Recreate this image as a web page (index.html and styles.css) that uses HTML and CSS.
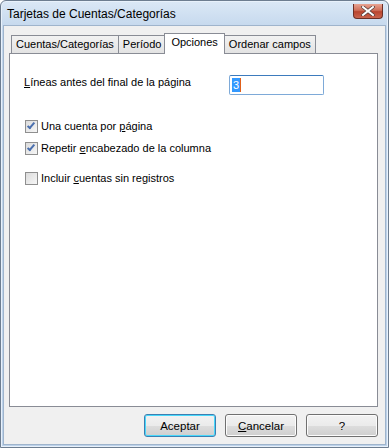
FILE: index.html
```html
<!DOCTYPE html>
<html lang="es">
<head>
    <meta charset="UTF-8">
    <title>Tarjetas de Cuentas/Categorías</title>
    <link rel="stylesheet" href="styles.css">
</head>
<body>
    <div class="window">
        <div class="titlebar">
            <span class="title">Tarjetas de Cuentas/Categorías</span>
            <span class="close">
                <svg width="14" height="10" viewBox="0 0 14 10">
                    <path d="M2 1 L12 9 M12 1 L2 9" stroke="#4a3a3a" stroke-width="3.4" stroke-linecap="square"/>
                    <path d="M2 1 L12 9 M12 1 L2 9" stroke="#fff" stroke-width="2" stroke-linecap="square"/>
                </svg>
            </span>
        </div>
        <div class="client">
            <ul class="tabs">
                <li class="tab">Cuentas/Categorías</li>
                <li class="tab">Período</li>
                <li class="tab active">Opciones</li>
                <li class="tab">Ordenar campos</li>
            </ul>
            <section class="panel">
                <div class="field">
                    <label class="field-label"><u>L</u>íneas antes del final de la página</label>
                    <span class="input"><span class="sel">3</span><span class="caret"></span></span>
                </div>
                <div class="checks">
                    <label class="check"><span class="box on"></span><span>Una cuenta por <u>p</u>ágina</span></label>
                    <label class="check"><span class="box on"></span><span>Repetir <u>e</u>ncabezado de la columna</span></label>
                    <label class="check spaced"><span class="box"></span><span>Incluir <u>c</u>uentas sin registros</span></label>
                </div>
            </section>
            <div class="buttons">
                <button class="btn default">Aceptar</button>
                <button class="btn"><u>C</u>ancelar</button>
                <button class="btn">?</button>
            </div>
        </div>
    </div>
</body>
</html>
```

FILE: styles.css
```css
html {
    box-sizing: border-box;
}

*, *::after, *::before {
    box-sizing: inherit;
}

body {
    margin: 0;
    font-family: 'Liberation Sans', Arial, sans-serif;
    font-size: 11px;
    color: #000;
}

u {
    text-decoration: underline;
    text-underline-offset: 1px;
}

.window {
    width: 389px;
    height: 448px;
    display: flex;
    flex-direction: column;
    border: 1px solid #6d7d90;
    border-radius: 6px 6px 0 0;
    background: linear-gradient(#dbe8f6, #c2d6ec 30px, #bcd2ea);
    box-shadow: inset 0 0 0 1px #e8f1fb;
}

.titlebar {
    height: 24px;
    display: flex;
    align-items: center;
    padding: 0 5px 0 6px;
}

.title {
    font-size: 12px;
    margin-top: 1px;
}

.close {
    margin-left: auto;
    width: 30px;
    height: 15px;
    margin-top: -4px;
    display: flex;
    align-items: center;
    justify-content: center;
    border: 1px solid #6b2f26;
    border-top: none;
    border-radius: 0 0 4px 4px;
    background: linear-gradient(#e8a493, #cf6f5a 45%, #b9452f 55%, #c9644e);
}

.client {
    flex: 1;
    margin: 0 2px 2px 2px;
    border: 1px solid #9fb4cc;
    background: #f0f0f0;
    display: flex;
    flex-direction: column;
    padding: 6px 7px 7px 5px;
}

.tabs {
    list-style: none;
    margin: 0;
    padding: 0 0 0 2px;
    display: flex;
    align-items: flex-end;
    height: 21px;
    position: relative;
    z-index: 1;
}

.tab {
    height: 18px;
    padding: 2px 4px 0 4px;
    border: 1px solid #898c95;
    border-bottom: none;
    margin-right: -1px;
    background: linear-gradient(#f2f2f2, #e3e3e3);
    white-space: nowrap;
}

.tab.active {
    height: 21px;
    margin: 0 -1px -1px -1px;
    padding: 2px 6px 0 6px;
    background: #fff;
    position: relative;
    z-index: 2;
}

.panel {
    flex: 1;
    background: #fff;
    border: 1px solid #898c95;
    padding: 21px 14px 0 14px;
}

.field {
    display: flex;
    align-items: flex-start;
}

.field-label {
    width: 205px;
    padding-top: 1px;
}

.input {
    width: 95px;
    height: 20px;
    border: 1px solid #7eaad8;
    border-top-color: #3d7bbd;
    border-radius: 2px;
    background: #fff;
    display: flex;
    align-items: center;
    padding-left: 2px;
}

.sel {
    background: #3399ff;
    color: #fff;
    line-height: 14px;
    padding: 0 1px;
}

.caret {
    width: 1px;
    height: 14px;
    background: #e0601a;
}

.checks {
    margin-top: 24px;
    display: flex;
    flex-direction: column;
    gap: 8px;
}

.check {
    display: flex;
    align-items: center;
    height: 14px;
}

.check.spaced {
    margin-top: 8px;
}

.box {
    width: 13px;
    height: 13px;
    border: 1px solid #8f8f8f;
    background: linear-gradient(135deg, #dcdcdc, #f6f6f6);
    margin: 0 3px 0 1px;
    position: relative;
}

.box.on::after {
    content: '';
    position: absolute;
    left: 3px;
    top: 0;
    width: 4px;
    height: 8px;
    border: solid #4a6fae;
    border-width: 0 2px 2px 0;
    transform: rotate(40deg);
}

.buttons {
    display: flex;
    justify-content: flex-end;
    gap: 9px;
    margin-top: 7px;
}

.btn {
    width: 72px;
    height: 23px;
    font-family: inherit;
    font-size: 11.5px;
    color: #000;
    border: 1px solid #707070;
    border-radius: 3px;
    background: linear-gradient(#f2f2f2 0, #ebebeb 50%, #dddddd 51%, #cfcfcf);
    box-shadow: inset 0 0 0 1px #fcfcfc;
    padding: 0;
}

.btn.default {
    border-color: #3c7fb1;
    box-shadow: inset 0 0 0 1px #48d8fb;
}
```
